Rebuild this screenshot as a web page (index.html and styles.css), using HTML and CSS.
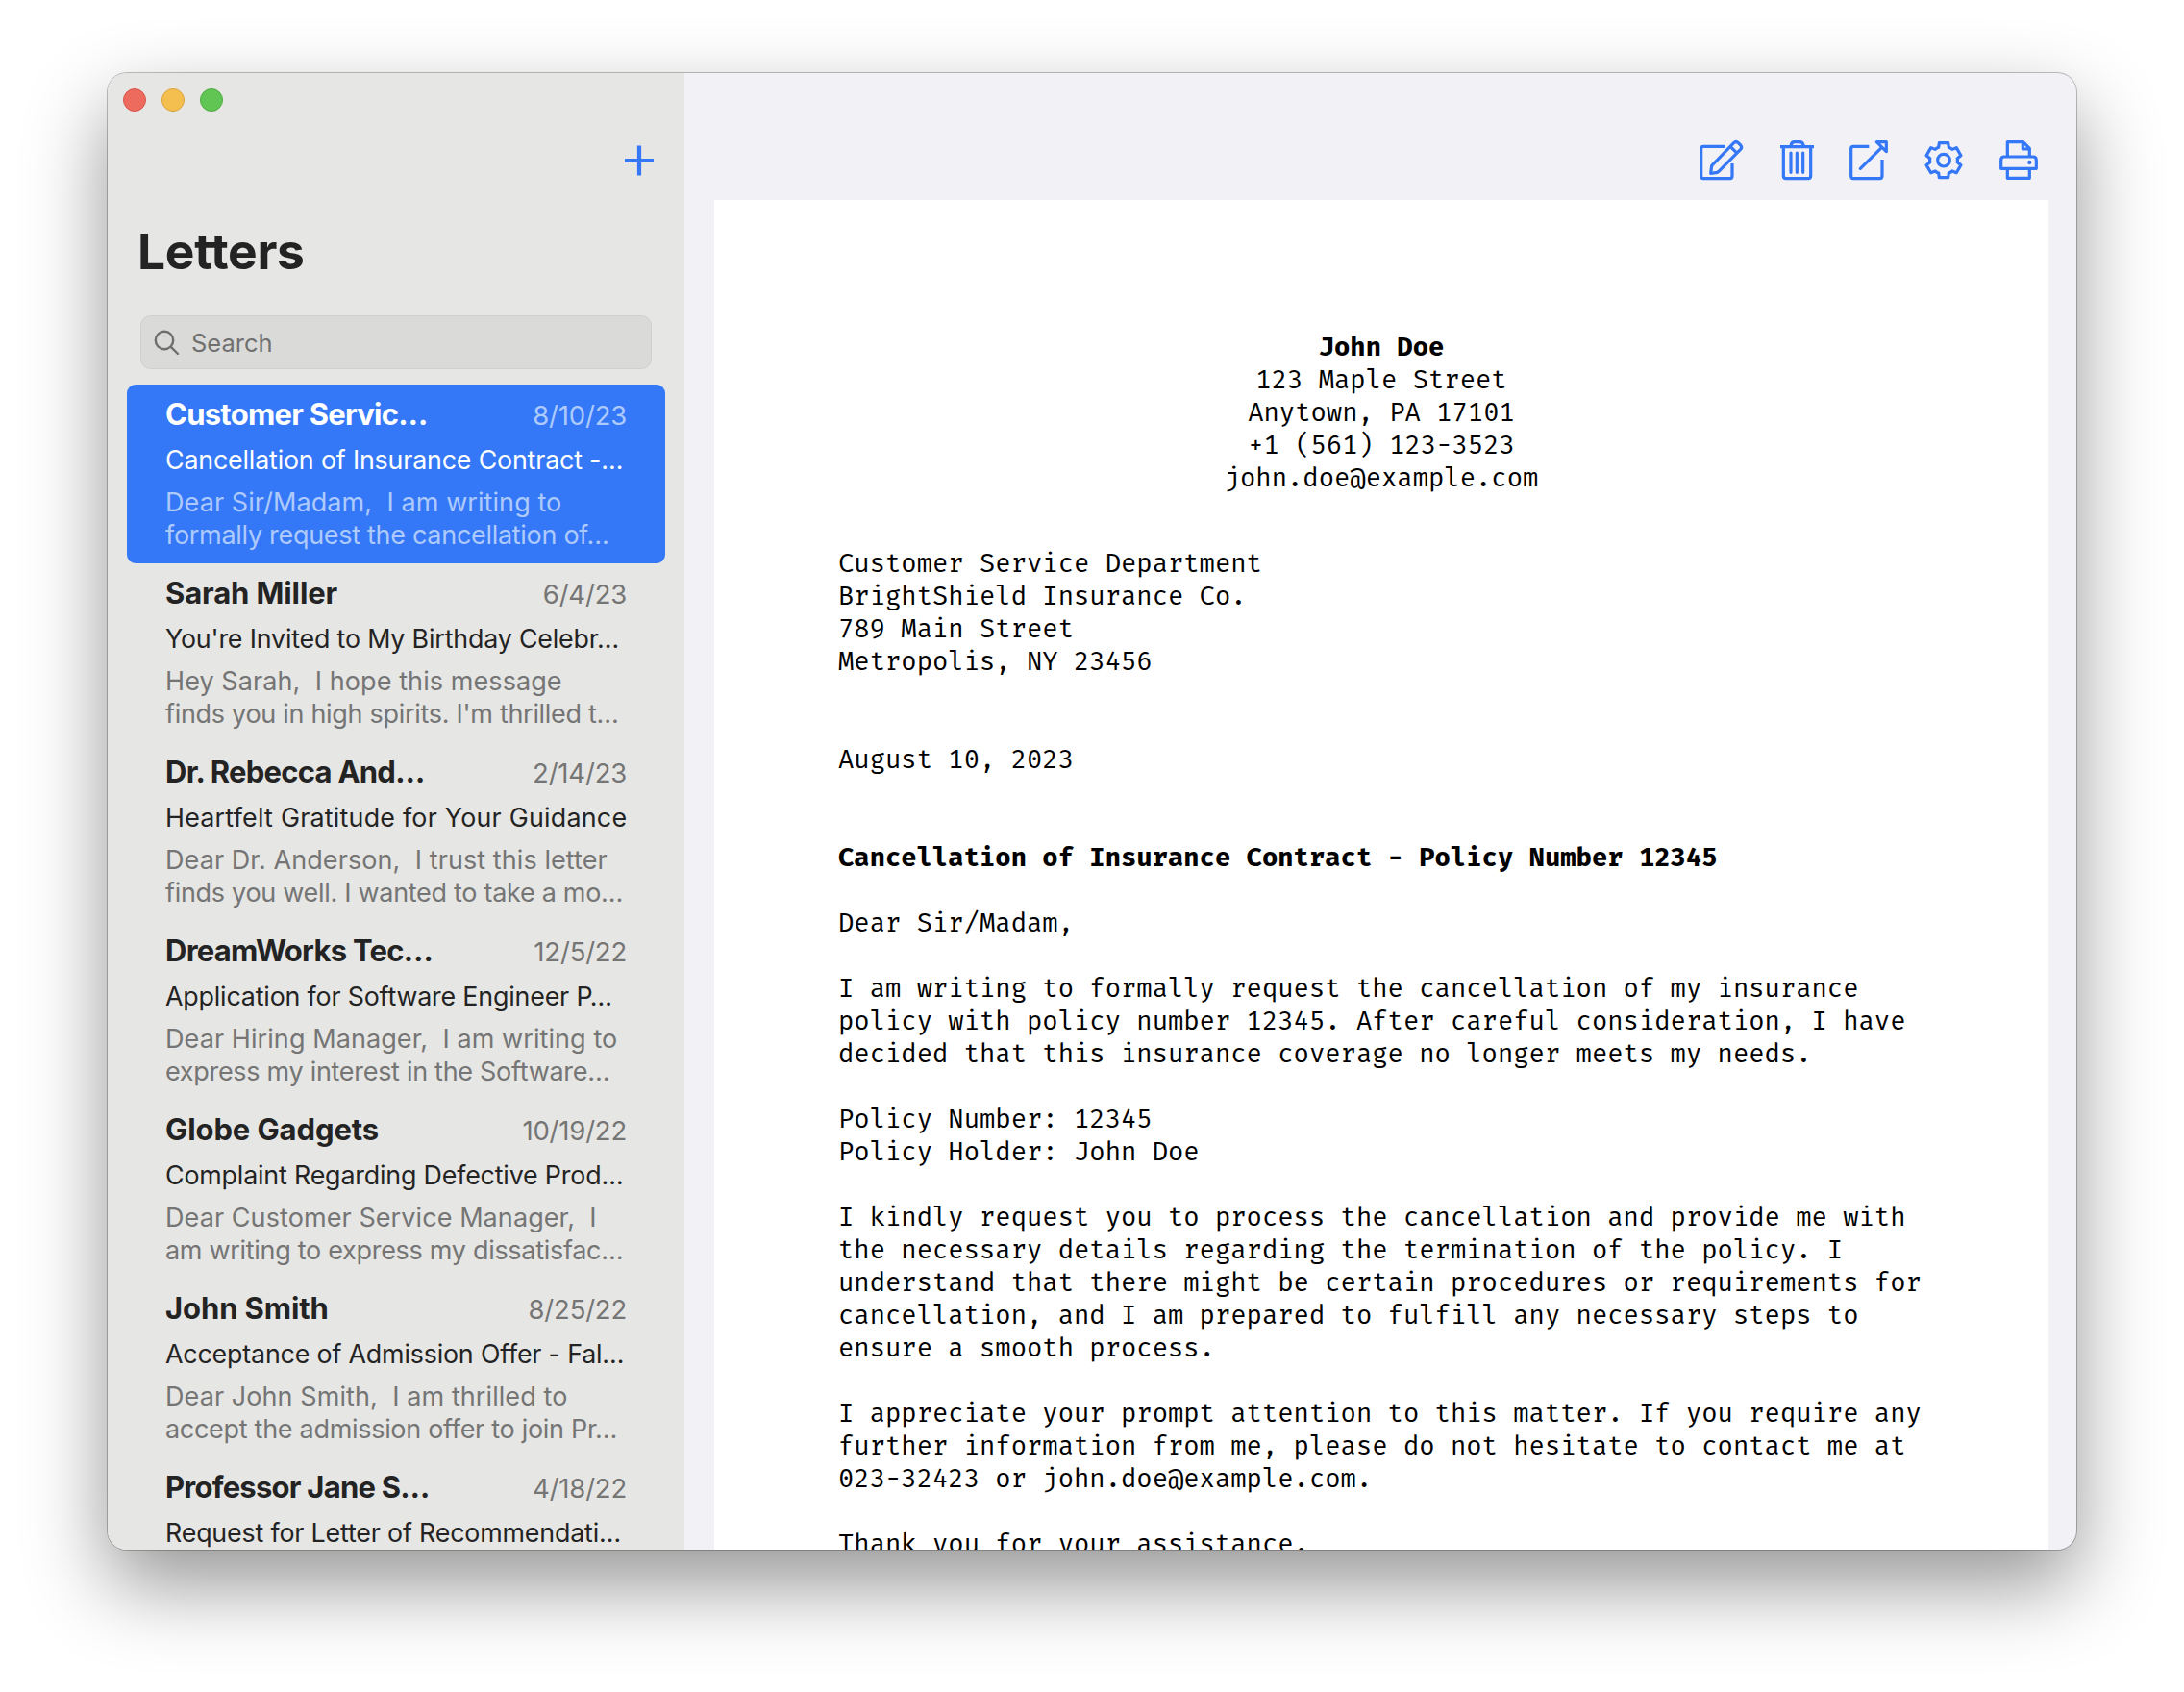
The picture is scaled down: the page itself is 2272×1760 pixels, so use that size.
FILE: index.html
```html
<!DOCTYPE html>
<html lang="en">
<head>
<meta charset="utf-8">
<title>Letters</title>
<link rel="stylesheet" href="styles.css">
</head>
<body>
<div class="window">
  <aside class="sidebar">
    <div class="lights"><i class="light close"></i><i class="light minimize"></i><i class="light expand"></i></div>
    <div class="add-row">
      <svg class="plus" viewBox="0 0 32 32"><path d="M16 .5V31.5M1 16H31"/></svg>
    </div>
    <h1 class="heading">Letters</h1>
    <div class="search">
      <svg class="glass" viewBox="0 0 27 27"><circle cx="11" cy="11" r="9.2"/><path d="M17.8 17.8L25 25"/></svg>
      <span>Search</span>
    </div>
    <ul class="list">
      <li class="item selected">
        <div class="top"><b class="name tight">Customer Servic…</b><span class="date">8/10/23</span></div>
        <div class="subject tight">Cancellation of Insurance Contract -…</div>
        <div class="preview">Dear Sir/Madam,&nbsp; I am writing to<br>formally request the cancellation of…</div>
      </li>
      <li class="item">
        <div class="top"><b class="name">Sarah Miller</b><span class="date">6/4/23</span></div>
        <div class="subject tight">You're Invited to My Birthday Celebr…</div>
        <div class="preview">Hey Sarah,&nbsp; I hope this message<br>finds you in high spirits. I'm thrilled t…</div>
      </li>
      <li class="item">
        <div class="top"><b class="name tight">Dr. Rebecca And…</b><span class="date">2/14/23</span></div>
        <div class="subject">Heartfelt Gratitude for Your Guidance</div>
        <div class="preview">Dear Dr. Anderson,&nbsp; I trust this letter<br>finds you well. I wanted to take a mo…</div>
      </li>
      <li class="item">
        <div class="top"><b class="name tight">DreamWorks Tec…</b><span class="date">12/5/22</span></div>
        <div class="subject tight">Application for Software Engineer P…</div>
        <div class="preview">Dear Hiring Manager,&nbsp; I am writing to<br>express my interest in the Software…</div>
      </li>
      <li class="item">
        <div class="top"><b class="name">Globe Gadgets</b><span class="date">10/19/22</span></div>
        <div class="subject tight">Complaint Regarding Defective Prod…</div>
        <div class="preview">Dear Customer Service Manager,&nbsp; I<br>am writing to express my dissatisfac…</div>
      </li>
      <li class="item">
        <div class="top"><b class="name">John Smith</b><span class="date">8/25/22</span></div>
        <div class="subject tight">Acceptance of Admission Offer - Fal…</div>
        <div class="preview">Dear John Smith,&nbsp; I am thrilled to<br>accept the admission offer to join Pr…</div>
      </li>
      <li class="item">
        <div class="top"><b class="name tight">Professor Jane S…</b><span class="date">4/18/22</span></div>
        <div class="subject tight">Request for Letter of Recommendati…</div>
      </li>
    </ul>
  </aside>
  <main class="detail">
    <div class="toolbar">
      <svg class="icon" width="48" height="43" viewBox="0 0 144 129"><path d="M84 22H15Q8 22 8 29V114Q8 122 15 122H98Q105 122 105 114V75"/><path d="M41 82L110 11Q117 4 124 11L131 18Q137 25 131 31L65 98L59 103L38 106ZM100 23L121 44"/></svg>
      <svg class="icon trash" width="37" height="43" viewBox="0 0 111 129"><path d="M3 23H108M36 20Q38 8 47 8H64Q73 8 76 20M13 24V114Q13 122 21 122H90Q98 122 98 114V24"/><path class="round" d="M36 42V103M55 42V103M74 42V103"/></svg>
      <svg class="icon share" width="42" height="43" viewBox="0 0 126 129"><path d="M64 22H15Q8 22 8 29V114Q8 122 15 122H97Q105 122 105 114V63"/><path class="round" d="M37 91L103 26"/><path d="M88 8H118V38Z"/></svg>
      <svg class="icon gear" width="40" height="43" viewBox="-60 -65 120 129"><path d="M-16-40L-14-54H14L16-40Q22-38 26.600-33.900L39.800-39.100L53.800-14.900L42.600-6.100Q44 0 42.600 6.100L53.800 14.900L39.800 39.100L26.600 33.900Q22 38 16 40L14 54H-14L-16 40Q-22 38-26.600 33.900L-39.800 39.100L-53.800 14.900L-42.600 6.100Q-44 0-42.600-6.100L-53.800-14.900L-39.800-39.100L-26.600-33.900Q-22-38-16-40Z"/><circle r="19"/></svg>
      <svg class="icon printer" width="42" height="43" viewBox="0 0 126 129"><path d="M28 54V8H77L97 28V54M76 9V30H97M8 91V65Q8 54 18 54H108Q118 54 118 65V91ZM28 95V121H97V95"/><circle class="dot" cx="97" cy="72" r="6.500"/></svg>
    </div>
    <article class="paper">
      <header class="sender"><b>John Doe</b>
123 Maple Street
Anytown, PA 17101
+1 (561) 123-3523
john.doe@example.com</header>
      <div class="body">Customer Service Department
BrightShield Insurance Co.
789 Main Street
Metropolis, NY 23456


August 10, 2023


<b>Cancellation of Insurance Contract - Policy Number 12345</b>

Dear Sir/Madam,

I am writing to formally request the cancellation of my insurance
policy with policy number 12345. After careful consideration, I have
decided that this insurance coverage no longer meets my needs.

Policy Number: 12345
Policy Holder: John Doe

I kindly request you to process the cancellation and provide me with
the necessary details regarding the termination of the policy. I
understand that there might be certain procedures or requirements for
cancellation, and I am prepared to fulfill any necessary steps to
ensure a smooth process.

I appreciate your prompt attention to this matter. If you require any
further information from me, please do not hesitate to contact me at
023-32423 or john.doe@example.com.

Thank you for your assistance.</div>
    </article>
  </main>
</div>
</body>
</html>
```
FILE: styles.css
```css
* { box-sizing: border-box; }
body {
  margin: 0;
  height: 1760px;
  padding: 76px 112px 0;
  background: #fff;
  overflow: hidden;
  font-family: Inter, "Liberation Sans", sans-serif;
}
.window {
  display: flex;
  width: 2048px;
  height: 1536px;
  border-radius: 20px;
  overflow: hidden;
  background: #f2f1f6;
  box-shadow: 0 0 0 1px rgba(0, 0, 0, .24), 0 36px 84px rgba(0, 0, 0, .42);
}
.sidebar {
  width: 600px;
  flex: none;
  background: #e6e6e4;
  color: #232323;
  overflow: hidden;
}
.lights { display: flex; gap: 16px; padding: 16px 0 0 16px; }
.light { width: 24px; height: 24px; border-radius: 50%; border: 1px solid; }
.close { background: #ed6a5e; border-color: #d65549; }
.minimize { background: #f5bf4f; border-color: #d9a23c; }
.expand { background: #61c554; border-color: #4eab40; }
.add-row { display: flex; justify-content: flex-end; padding: 35px 31px 0 0; }
.plus { width: 32px; height: 32px; fill: none; stroke: #3478f7; stroke-width: 4.2; }
.heading {
  margin: 48px 0 0 31px;
  font-size: 51.5px;
  line-height: 60px;
  font-weight: 700;
  letter-spacing: -.3px;
}
.search {
  display: flex;
  align-items: center;
  gap: 12px;
  width: 532px;
  height: 56px;
  margin: 37px 0 0 34px;
  padding-left: 13px;
  border: 1px solid #d0d0ce;
  border-radius: 11px;
  background: #dadad8;
  color: #707070;
  font-size: 25.5px;
}
.glass { width: 27px; height: 27px; fill: none; stroke: #6e6e6e; stroke-width: 2.4; stroke-linecap: round; }
.list { list-style: none; margin: 16px 20px 0; padding: 0; }
.item { height: 186px; padding: 13px 40px 0; border-radius: 9px; white-space: nowrap; }
.top { display: flex; justify-content: space-between; align-items: baseline; line-height: 36px; }
.name { font-size: 31px; font-weight: 700; letter-spacing: -.1px; }
.name.tight { letter-spacing: -.75px; }
.date { font-size: 27.5px; color: #757575; letter-spacing: -.2px; }
.subject { margin-top: 11px; font-size: 26.8px; line-height: 34px; letter-spacing: .25px; }
.subject.tight { letter-spacing: -.17px; }
.preview { margin-top: 11px; font-size: 27px; line-height: 34px; letter-spacing: -.3px; color: #757575; }
.preview::first-line { letter-spacing: .08px; }
.selected { background: #3478f7; color: #fff; }
.selected .date, .selected .preview { color: #aecafc; }
.detail { flex: 1; display: flex; flex-direction: column; }
.toolbar { display: flex; justify-content: flex-end; gap: 35px; height: 132px; padding: 69px 39px 0 0; flex: none; }
.icon { fill: none; stroke: #3478f7; stroke-width: 9.6; stroke-linejoin: round; }
.round { stroke-linecap: round; }
.trash { margin-left: 1px; }
.gear, .printer { margin-left: 2px; }
.dot { fill: #3478f7; stroke: none; }
.paper {
  flex: 1;
  min-height: 0;
  margin: 0 29px 0 31px;
  padding: 136px 0 0 129px;
  overflow: hidden;
  background: #fff;
  color: #000;
  font: 27.22px/34px "Fira Mono", "DejaVu Sans Mono", "Liberation Mono", monospace;
}
.sender, .body { white-space: pre; }
.sender { margin: 0 0 55px -129px; text-align: center; }
```
